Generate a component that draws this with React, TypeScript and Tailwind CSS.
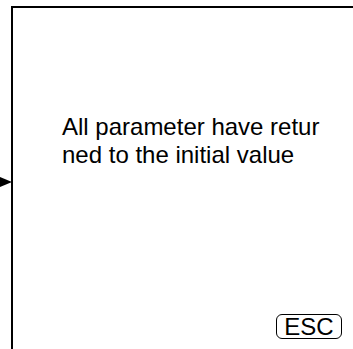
import React from 'react'

const App = () => {
  return (
    <div className="relative w-[353px] h-[349px] bg-white flex pt-[6px] pl-[11px] font-['Liberation_Sans',Arial,sans-serif] text-black">
      <div className="absolute left-0 top-[177px] w-0 h-0 border-y-[5px] border-y-transparent border-l-[12px] border-l-black" />
      <div className="flex-1 flex flex-col border-t-2 border-l-2 border-black">
        <p className="pt-[105px] pl-[49px] text-[24px] leading-[28px] whitespace-nowrap">
          All parameter have retur
          <br />
          ned to the initial value
        </p>
        <div className="mt-auto self-end mr-[11px] mb-[10px] w-[66px] h-[25px] border-[1.5px] border-black rounded-[6px] flex items-center justify-center text-[24px] leading-none">
          ESC
        </div>
      </div>
    </div>
  )
}

export default App
